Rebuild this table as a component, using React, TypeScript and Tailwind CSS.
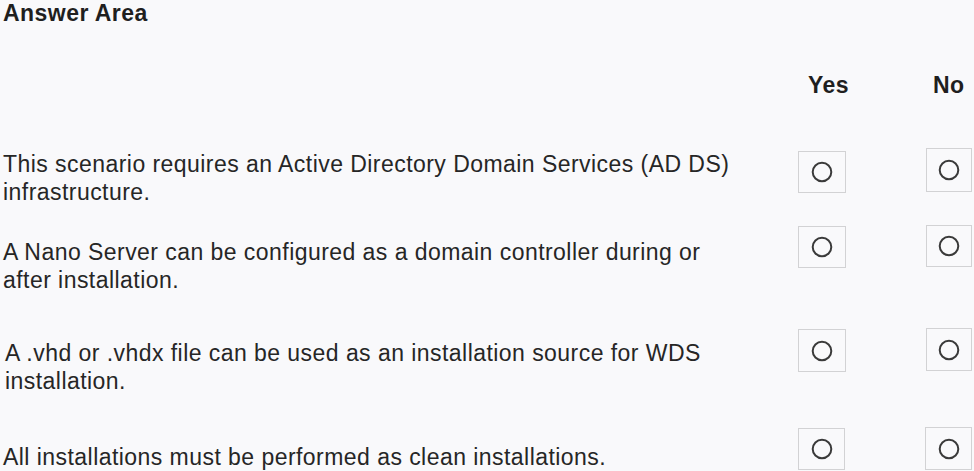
import React from "react";

const font = { fontFamily: '"Liberation Sans", Arial, sans-serif' };

function Radio({ className }: { className: string }) {
  return (
    <div className={`flex items-center justify-center border border-[#d2d2d4] ${className}`}>
      <svg width="22" height="22" viewBox="0 0 22 22">
        <circle cx="11" cy="11" r="9.3" fill="none" stroke="#3a3a3a" strokeWidth="2" />
      </svg>
    </div>
  );
}

export default function App() {
  return (
    <div
      className="w-[974px] h-[471px] overflow-hidden bg-[#f9f9fb] text-[#1f1f1f] text-[23px] tracking-[0.45px]"
      style={font}
    >
      <div className="pt-[2px] pl-[3px] font-bold leading-[23px]">Answer Area</div>

      <div className="mt-[49px] flex font-bold leading-[23px]">
        <div className="w-[798px]" />
        <div className="w-[48px] pl-[10px]">Yes</div>
        <div className="w-[80px]" />
        <div className="w-[46px] pl-[7px]">No</div>
      </div>

      <div className="mt-[51px] flex items-start leading-[28px]">
        <div className="w-[798px] mt-[2px] pl-[3px] whitespace-nowrap text-[#262626]">
          This scenario requires an Active Directory Domain Services (AD DS)
          <br />
          infrastructure.
        </div>
        <Radio className="w-[48px] h-[42px] mt-[3px]" />
        <div className="w-[80px]" />
        <Radio className="w-[46px] h-[44px]" />
      </div>

      <div className="mt-[19px] flex items-start leading-[28px]">
        <div className="w-[798px] mt-[13px] pl-[3px] whitespace-nowrap text-[#262626]">
          A Nano Server can be configured as a domain controller during or
          <br />
          after installation.
        </div>
        <Radio className="w-[48px] h-[42px] mt-[1px]" />
        <div className="w-[80px]" />
        <Radio className="w-[46px] h-[42px]" />
      </div>

      <div className="mt-[34px] flex items-start leading-[28px]">
        <div className="w-[798px] mt-[11px] pl-[5px] whitespace-nowrap text-[#262626]">
          A .vhd or .vhdx file can be used as an installation source for WDS
          <br />
          installation.
        </div>
        <Radio className="w-[48px] h-[43px] mt-[1px]" />
        <div className="w-[80px]" />
        <Radio className="w-[46px] h-[43px]" />
      </div>

      <div className="mt-[32px] flex items-start leading-[28px]">
        <div className="w-[798px] mt-[16px] pl-[3px] whitespace-nowrap text-[#262626]">
          All installations must be performed as clean installations.
        </div>
        <Radio className="w-[47px] h-[42px] mt-[1px]" />
        <div className="w-[80px]" />
        <Radio className="w-[47px] h-[43px]" />
      </div>
    </div>
  );
}
